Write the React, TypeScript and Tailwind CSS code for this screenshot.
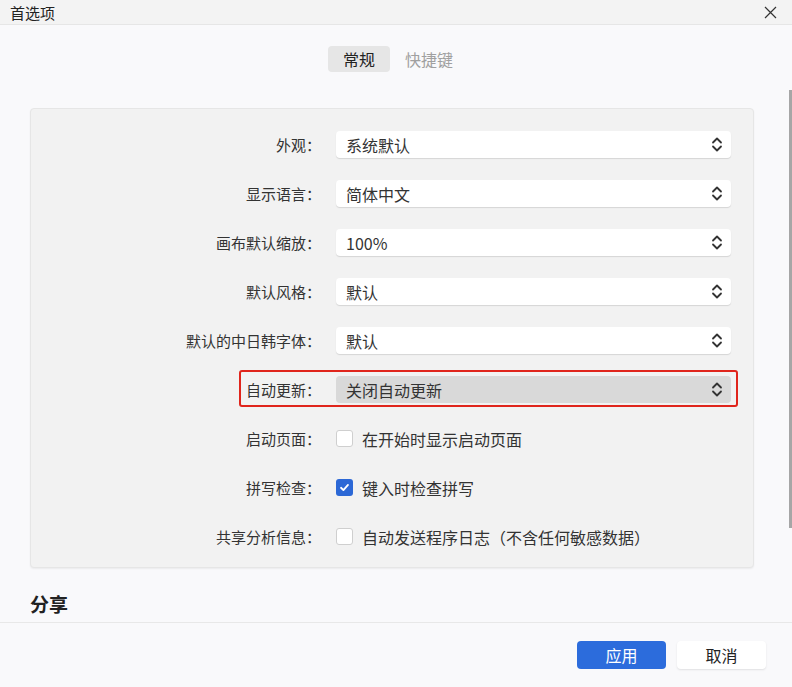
import React from 'react'

const font = { fontFamily: '"Noto Sans CJK SC", "Noto Sans", sans-serif' }

function Chevrons() {
  return (
    <svg width="12" height="17" viewBox="0 0 12 17" fill="none" className="text-[#333]">
      <path d="M2 6.5 L6 2.5 L10 6.5" stroke="currentColor" strokeWidth="1.8" strokeLinecap="round" strokeLinejoin="round" />
      <path d="M2 10.5 L6 14.5 L10 10.5" stroke="currentColor" strokeWidth="1.8" strokeLinecap="round" strokeLinejoin="round" />
    </svg>
  )
}

function Select({ value, active }: { value: string; active?: boolean }) {
  return (
    <div
      className={
        'flex h-[27px] w-[395px] items-center justify-between rounded-[4px] pl-[10px] pr-[8px] ' +
        (active ? 'bg-[#d9d9d9]' : 'bg-white shadow-[0_1px_1px_rgba(0,0,0,0.12)]')
      }
    >
      <span className="text-[16px] leading-none text-[#333]">{value}</span>
      <Chevrons />
    </div>
  )
}

function Checkbox({ checked }: { checked?: boolean }) {
  if (checked) {
    return (
      <div className="flex h-[17px] w-[17px] items-center justify-center rounded-[3px] bg-[#2c68d6]">
        <svg width="11" height="11" viewBox="0 0 12 12" fill="none">
          <path d="M2.2 6.3 L4.8 8.8 L9.8 3.2" stroke="white" strokeWidth="2" strokeLinecap="round" strokeLinejoin="round" />
        </svg>
      </div>
    )
  }
  return <div className="h-[17px] w-[17px] rounded-[3px] border border-[#cfcfcf] bg-white" />
}

function Row({ label, children, highlight }: { label: string; children: React.ReactNode; highlight?: boolean }) {
  return (
    <div className="relative flex h-[49px] items-center">
      {highlight && (
        <div className="absolute left-[208px] top-[5px] h-[37px] w-[499px] rounded-[3px] border-2 border-[#e0251c]" />
      )}
      <div className="w-[290px] text-right text-[15px] leading-none text-[#333]">{label}</div>
      <div className="ml-[15px] flex items-center">{children}</div>
    </div>
  )
}

function CheckRow({ label, text, checked }: { label: string; text: string; checked?: boolean }) {
  return (
    <Row label={label}>
      <div className="flex items-center gap-[9px]">
        <Checkbox checked={checked} />
        <span className="text-[16px] leading-none text-[#333]">{text}</span>
      </div>
    </Row>
  )
}

export default function App() {
  return (
    <div style={font} className="relative flex h-[687px] w-[792px] flex-col overflow-hidden bg-[#f9f9fb]">
      <div className="flex h-[25px] shrink-0 items-center justify-between border-b border-[#e6e6e6] bg-[#f3f3f3] pl-[10px] pr-[15px]">
        <span className="text-[15px] leading-none text-[#222]">首选项</span>
        <svg width="13" height="13" viewBox="0 0 13 13" fill="none">
          <path d="M1 1 L12 12 M12 1 L1 12" stroke="#333" strokeWidth="1.2" />
        </svg>
      </div>

      <div className="flex flex-1 flex-col">
        <div className="ml-[328px] mt-[21px] flex items-center gap-[15px]">
          <div className="flex h-[26px] w-[62px] items-center justify-center rounded-[4px] bg-[#e6e6e6] text-[16px] leading-none text-[#222]">
            常规
          </div>
          <span className="text-[16px] leading-none text-[#a0a0a0]">快捷键</span>
        </div>

        <div className="ml-[30px] mt-[36px] h-[460px] w-[724px] rounded-[4px] border border-[#e6e6e6] bg-[#f2f2f2] pt-[11px] shadow-[0_1px_2px_rgba(0,0,0,0.06)]">
          <Row label="外观：">
            <Select value="系统默认" />
          </Row>
          <Row label="显示语言：">
            <Select value="简体中文" />
          </Row>
          <Row label="画布默认缩放：">
            <Select value="100%" />
          </Row>
          <Row label="默认风格：">
            <Select value="默认" />
          </Row>
          <Row label="默认的中日韩字体：">
            <Select value="默认" />
          </Row>
          <Row label="自动更新：" highlight>
            <Select value="关闭自动更新" active />
          </Row>
          <CheckRow label="启动页面：" text="在开始时显示启动页面" />
          <CheckRow label="拼写检查：" text="键入时检查拼写" checked />
          <CheckRow label="共享分析信息：" text="自动发送程序日志（不含任何敏感数据）" />
        </div>

        <div className="ml-[30px] mt-[26px] text-[19px] font-semibold leading-none text-[#222]">分享</div>
      </div>

      <div className="flex h-[65px] shrink-0 items-center justify-end gap-[11px] border-t border-[#e8e8e8] bg-[#f9f9fb] pr-[26px]">
        <button className="flex h-[28px] w-[89px] items-center justify-center rounded-[4px] bg-[#2c6cdc] text-[16px] leading-none text-white">
          应用
        </button>
        <button className="flex h-[28px] w-[89px] items-center justify-center rounded-[4px] bg-white text-[16px] leading-none text-[#222] shadow-[0_1px_2px_rgba(0,0,0,0.1)]">
          取消
        </button>
      </div>

      <div className="absolute left-[789px] top-[90px] h-[438px] w-[3px] bg-[#a6a6a6]" />
    </div>
  )
}
